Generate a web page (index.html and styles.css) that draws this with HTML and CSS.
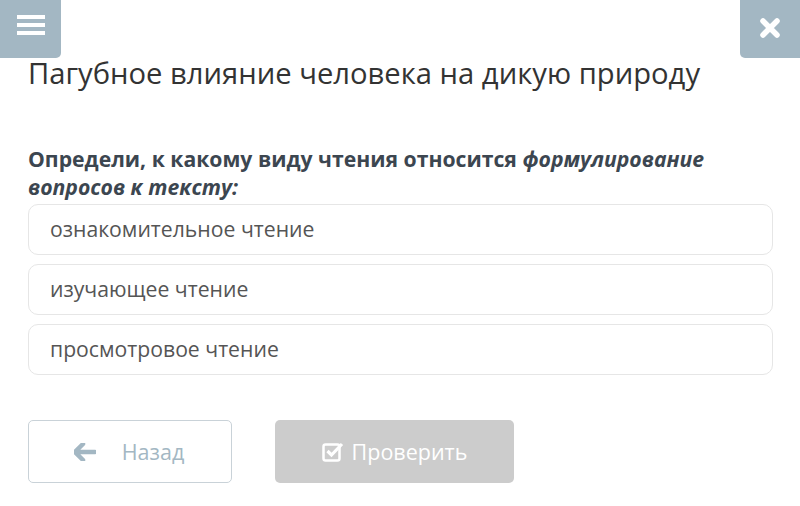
FILE: index.html
```html
<!DOCTYPE html>
<html lang="ru">
<head>
  <meta charset="UTF-8" />
  <meta name="viewport" content="width=device-width, initial-scale=1.0" />
  <title>Пагубное влияние человека на дикую природу</title>
  <link rel="stylesheet" href="styles.css">
</head>
<body>
  <div class="topbar">
    <button class="corner menu" aria-label="Меню">
      <svg width="28" height="20" viewBox="0 0 28 20"><rect x="0" y="0" width="28" height="4" fill="#fff"/><rect x="0" y="8" width="28" height="4" fill="#fff"/><rect x="0" y="16" width="28" height="4" fill="#fff"/></svg>
    </button>
    <button class="corner close" aria-label="Закрыть">
      <svg width="22" height="22" viewBox="0 0 22 22"><path d="M4 4 L18 18 M18 4 L4 18" stroke="#fff" stroke-width="5.5" stroke-linecap="round"/></svg>
    </button>
  </div>

  <main class="quiz">
    <h1>Пагубное влияние человека на дикую природу</h1>
    <p class="question">Определи, к какому виду чтения относится <em>формулирование вопросов к тексту:</em></p>
    <div class="options">
      <div class="option">ознакомительное чтение</div>
      <div class="option">изучающее чтение</div>
      <div class="option">просмотровое чтение</div>
    </div>
    <div class="actions">
      <button class="btn back">
        <svg width="22" height="18" viewBox="0 0 22 18"><path d="M9 1 L1 9 L9 17 M2 9 L21 9" stroke="#a3b7c3" stroke-width="4.5" fill="none" stroke-linejoin="round" stroke-linecap="round"/></svg>
        <span>Назад</span>
      </button>
      <button class="btn check" disabled>
        <svg width="22" height="21" viewBox="0 0 22 21"><rect x="1.5" y="3.5" width="16" height="16" rx="2" stroke="#fff" stroke-width="2.5" fill="none"/><path d="M5.5 10 L9.5 14 L20 3" stroke="#fff" stroke-width="3.2" fill="none"/></svg>
        <span>Проверить</span>
      </button>
    </div>
  </main>
</body>
</html>
```

FILE: styles.css
```css
* {
  box-sizing: border-box;
}

body {
  margin: 0;
  font-family: 'Open Sans', sans-serif;
  background: #fff;
  color: #333;
}

.topbar {
  display: flex;
  justify-content: space-between;
  height: 0;
}

.corner {
  width: 61px;
  height: 58px;
  border: none;
  background: #a3b7c3;
  display: flex;
  align-items: center;
  justify-content: center;
  padding: 0;
  position: relative;
  z-index: 1;
}

.menu {
  border-radius: 0 0 5px 0;
  padding-bottom: 8px;
}

.close {
  width: 60px;
  border-radius: 0 0 0 5px;
  padding-bottom: 3px;
}

.quiz {
  padding: 53px 27px 0 28px;
}

h1 {
  font-weight: 400;
  font-size: 29.2px;
  margin: 0;
  color: #333;
  line-height: 40px;
}

.question {
  font-weight: 700;
  font-size: 21.2px;
  line-height: 28px;
  color: #3c4650;
  margin: 52px 0 0;
}

.question em {
  font-style: italic;
}

.options {
  display: flex;
  flex-direction: column;
  gap: 9px;
  margin-top: 3px;
}

.option {
  height: 51px;
  border: 1px solid #e6e6e6;
  border-radius: 10px;
  padding: 0 21px;
  display: flex;
  align-items: center;
  font-size: 21.2px;
  color: #555;
  padding-bottom: 2px;
}

.actions {
  display: flex;
  gap: 43px;
  margin-top: 45px;
}

.btn {
  height: 63px;
  border-radius: 5px;
  font-family: 'Open Sans', sans-serif;
  font-size: 21.5px;
  display: flex;
  align-items: center;
  justify-content: center;
  gap: 26px;
}

.back {
  width: 204px;
  background: #fff;
  border: 1px solid #c9d2d8;
  color: #a3b7c3;
  padding-left: 4px;
}

.check {
  width: 239px;
  background: #cccccc;
  border: none;
  color: #fff;
  gap: 8px;
}
```
